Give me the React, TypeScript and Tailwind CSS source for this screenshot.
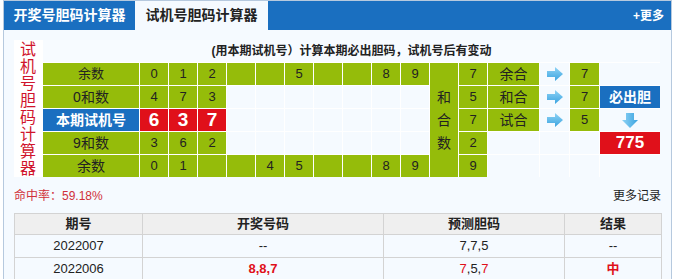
import React from 'react';

const font = { fontFamily: '"Liberation Sans", "Noto Sans CJK SC", sans-serif' };

const RightArrow = () => (
  <svg width="16" height="14" viewBox="0 0 16 14">
    <defs>
      <linearGradient id="ra" x1="0" y1="0" x2="0" y2="1">
        <stop offset="0" stopColor="#8fd3f5" />
        <stop offset="1" stopColor="#3aa3e0" />
      </linearGradient>
    </defs>
    <path d="M0 4 H8 V0 L16 7 L8 14 V10 H0 Z" fill="url(#ra)" />
  </svg>
);

const DownArrow = () => (
  <svg width="16" height="15" viewBox="0 0 16 15">
    <defs>
      <linearGradient id="da" x1="0" y1="0" x2="1" y2="0">
        <stop offset="0" stopColor="#8fd3f5" />
        <stop offset="1" stopColor="#3aa3e0" />
      </linearGradient>
    </defs>
    <path d="M4 0 H12 V7 H16 L8 15 L0 7 H4 Z" fill="url(#da)" />
  </svg>
);

const G = ({ children }: { children?: React.ReactNode }) => (
  <div className="bg-[#95bc0a] flex items-center justify-center text-[13px] text-[#222]">
    {children}
  </div>
);

const E = () => <div className="bg-[#f5faff]" />;

const digitsRow = (vals: (string | null)[]) =>
  vals.map((v, i) => <G key={i}>{v ?? ''}</G>);

const App = () => {
  return (
    <div className="w-[673px] h-[279px] bg-white overflow-hidden" style={font}>
      <div className="ml-[3px] w-[669px] h-[290px] border border-[#b6c9de] bg-[#f5faff]">
        {/* header tabs */}
        <div className="h-[29px] bg-[#1a6fc0] flex items-stretch">
          <div className="w-[131px] flex items-center justify-center text-white font-bold text-[14px]">
            开奖号胆码计算器
          </div>
          <div className="w-[133px] bg-[#f5faff] flex items-center justify-center text-[#222] font-bold text-[14px]">
            试机号胆码计算器
          </div>
          <div className="flex-1" />
          <div className="pr-[7px] flex items-center text-white font-bold text-[12px]">+更多</div>
        </div>

        <div className="pl-[10px] pt-[10px]">
          <div className="grid bg-white gap-px w-[646px] grid-cols-[28px_96px_repeat(10,28px)_28px_28px_51px_29px_29px_60px] grid-rows-[22px_repeat(5,22px)]">
            <div className="row-span-6 bg-white flex flex-col items-center justify-center text-[16px] leading-[17px] text-[#d0142c] pt-[1px]">
              {'试机号胆码计算器'.split('').map((c, i) => (
                <span key={i}>{c}</span>
              ))}
            </div>
            <div className="col-span-17 bg-[#f7fbff] flex items-center justify-center text-[12px] font-bold text-[#222]">
              (用本期试机号）计算本期必出胆码，试机号后有变动
            </div>

            {/* row 1 */}
            <G>余数</G>
            {digitsRow(['0', '1', '2', null, null, '5', null, null, '8', '9'])}
            <div className="row-span-5 bg-[#95bc0a] flex flex-col items-center justify-center text-[14px] leading-[23px] text-[#222]">
              <span>和</span>
              <span>合</span>
              <span>数</span>
            </div>
            <G>7</G>
            <G>
              <span className="text-[14px]">余合</span>
            </G>
            <div className="bg-[#f5faff] flex items-center justify-center">
              <RightArrow />
            </div>
            <G>7</G>
            <E />

            {/* row 2 */}
            <G>
              <span className="text-[14px]">0和数</span>
            </G>
            {digitsRow(['4', '7', '3'])}
            {Array.from({ length: 7 }).map((_, i) => (
              <E key={i} />
            ))}
            <G>5</G>
            <G>
              <span className="text-[14px]">和合</span>
            </G>
            <div className="bg-[#f5faff] flex items-center justify-center">
              <RightArrow />
            </div>
            <G>7</G>
            <div className="bg-[#1a6fc0] flex items-center justify-center text-white font-bold text-[14px]">
              必出胆
            </div>

            {/* row 3 */}
            <div className="bg-[#1a6fc0] flex items-center justify-center text-white font-bold text-[14px]">
              本期试机号
            </div>
            {['6', '3', '7'].map((v) => (
              <div
                key={v}
                className="bg-[#e0101a] flex items-center justify-center text-white font-bold text-[19px]"
              >
                {v}
              </div>
            ))}
            {Array.from({ length: 7 }).map((_, i) => (
              <E key={i} />
            ))}
            <G>7</G>
            <G>
              <span className="text-[14px]">试合</span>
            </G>
            <div className="bg-[#f5faff] flex items-center justify-center">
              <RightArrow />
            </div>
            <G>5</G>
            <div className="bg-[#f5faff] flex items-center justify-center">
              <DownArrow />
            </div>

            {/* row 4 */}
            <G>
              <span className="text-[14px]">9和数</span>
            </G>
            {digitsRow(['3', '6', '2'])}
            {Array.from({ length: 7 }).map((_, i) => (
              <E key={i} />
            ))}
            <G>2</G>
            <E />
            <E />
            <E />
            <div className="bg-[#e0101a] flex items-center justify-center text-white font-bold text-[17px]">
              775
            </div>

            {/* row 5 */}
            <G>
              <span className="text-[14px]">余数</span>
            </G>
            {digitsRow(['0', '1', null, null, '4', '5', null, null, '8', '9'])}
            <G>9</G>
            <E />
            <E />
            <E />
            <E />
          </div>

          <div className="w-[647px] flex justify-between items-center mt-[12px] h-[14px]">
            <span className="text-[12px] text-[#d0303a]">命中率：59.18%</span>
            <span className="text-[12px] text-[#222]">更多记录</span>
          </div>

          <table className="mt-[10px] w-[647px] border-collapse text-[13px] text-[#222] table-fixed">
            <colgroup>
              <col className="w-[128px]" />
              <col className="w-[241px]" />
              <col className="w-[181px]" />
              <col className="w-[97px]" />
            </colgroup>
            <thead>
              <tr className="h-[20px] bg-[#efefef]">
                <th className="border border-[#d3d3d3] font-bold">期号</th>
                <th className="border border-[#d3d3d3] font-bold">开奖号码</th>
                <th className="border border-[#d3d3d3] font-bold">预测胆码</th>
                <th className="border border-[#d3d3d3] font-bold">结果</th>
              </tr>
            </thead>
            <tbody>
              <tr className="h-[23px]">
                <td className="border border-[#d3d3d3] text-center">2022007</td>
                <td className="border border-[#d3d3d3] text-center">--</td>
                <td className="border border-[#d3d3d3] text-center">7,7,5</td>
                <td className="border border-[#d3d3d3] text-center">--</td>
              </tr>
              <tr className="h-[23px]">
                <td className="border border-[#d3d3d3] text-center">2022006</td>
                <td className="border border-[#d3d3d3] text-center text-[#e0101a] font-bold">8,8,7</td>
                <td className="border border-[#d3d3d3] text-center">
                  <span className="text-[#e0101a]">7</span>,5,<span className="text-[#e0101a]">7</span>
                </td>
                <td className="border border-[#d3d3d3] text-center text-[#e0101a] font-bold">中</td>
              </tr>
            </tbody>
          </table>
        </div>
      </div>
    </div>
  );
};

export default App;
